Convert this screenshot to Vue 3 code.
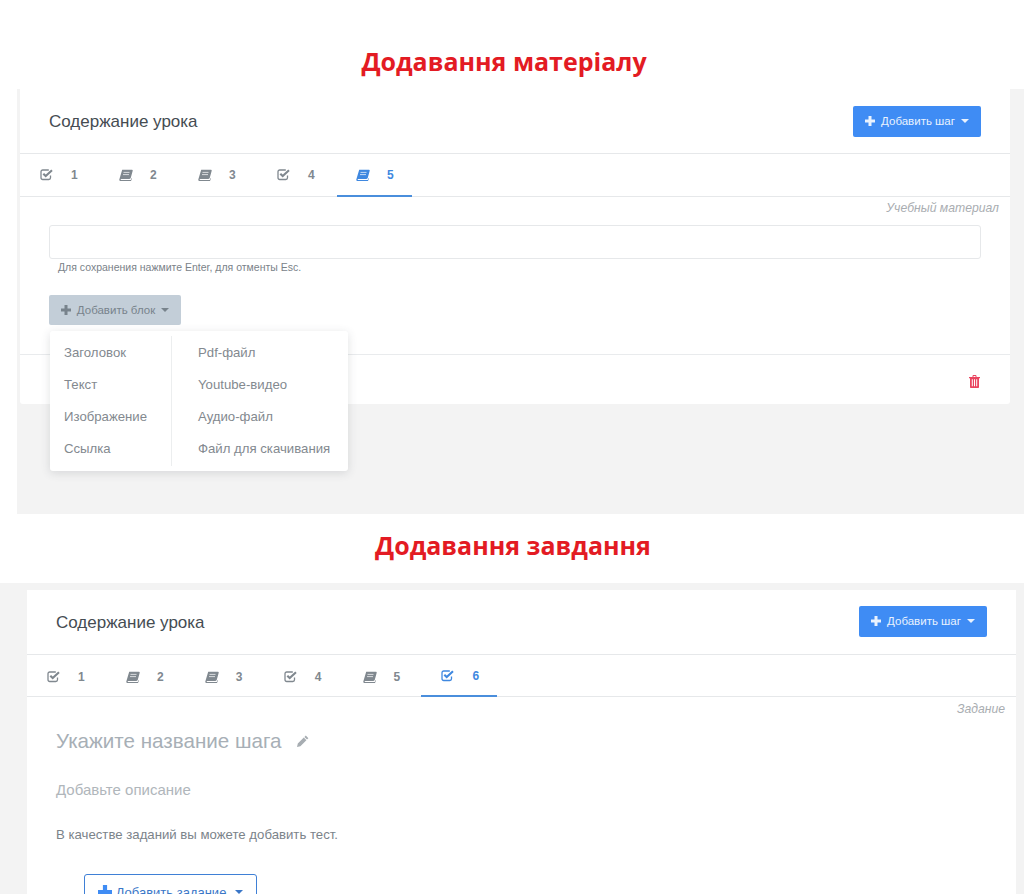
<script setup>
const tabs1 = [
  { n: 1, t: 'check' }, { n: 2, t: 'book' }, { n: 3, t: 'book' }, { n: 4, t: 'check' }, { n: 5, t: 'book', active: true }
]
const tabs2 = [
  { n: 1, t: 'check' }, { n: 2, t: 'book' }, { n: 3, t: 'book' }, { n: 4, t: 'check' }, { n: 5, t: 'book' }, { n: 6, t: 'check', active: true }
]
const menuLeft = ['Заголовок', 'Текст', 'Изображение', 'Ссылка']
const menuRight = ['Pdf-файл', 'Youtube-видео', 'Аудио-файл', 'Файл для скачивания']
</script>

<template>
  <div class="page">
    <h1 class="title first">Додавання матеріалу</h1>
    <section class="panel panel-one">
      <div class="card">
        <header class="head">
          <span class="head-title">Содержание урока</span>
          <button class="btn-primary">
            <svg class="plus" viewBox="0 0 10 10"><path d="M3.500 0h3v3.500H10v3H6.500V10h-3V6.500H0v-3h3.500z" /></svg>
            <span>Добавить шаг</span>
            <i class="caret"></i>
          </button>
        </header>
        <nav class="tabs">
          <div v-for="tab in tabs1" :key="tab.n" class="tab" :class="{ active: tab.active }">
            <svg v-if="tab.t === 'check'" class="ico" viewBox="0 0 14 12"><path d="M10.500 6.500v2.300c0 1-.7 1.700-1.700 1.700H2.700C1.700 10.500 1 9.800 1 8.800V2.700C1 1.700 1.700 1 2.700 1h6.100" fill="none" stroke="currentColor" stroke-width="1.300" /><path d="M3.300 4.700 5.700 7.100 12 1.300" fill="none" stroke="currentColor" stroke-width="2.100" /></svg>
            <svg v-else class="ico" viewBox="0 0 14 12"><path d="M3.200.8h9.800c.6 0 .8.400.7 1l-1.900 7c-.2.800-.7 1.100-1.400 1.100H2.200c-.6 0-.8.400-.7.700.1.300.4.400.8.400h8.800c.4 0 .8-.2.900-.6l.4-1.400.5.400-.8 2.300c-.1.400-.5.600-.9.600H2c-1 0-1.800-.8-1.700-1.800z" fill="currentColor" /><path d="M4.500 3.400h6M4 5.600h6" stroke="#fff" stroke-width=".7" /></svg>
            <span class="num">{{ tab.n }}</span>
          </div>
        </nav>
        <div class="kind">Учебный материал</div>
        <div class="body-one">
          <div class="field"></div>
          <p class="hint">Для сохранения нажмите Enter, для отменты Esc.</p>
          <div class="menu-wrap">
            <button class="btn-muted">
              <svg class="plus" viewBox="0 0 10 10"><path d="M3.500 0h3v3.500H10v3H6.500V10h-3V6.500H0v-3h3.500z" /></svg>
              <span>Добавить блок</span>
              <i class="caret"></i>
            </button>
            <div class="menu">
              <ul class="menu-col left">
                <li v-for="item in menuLeft" :key="item">{{ item }}</li>
              </ul>
              <ul class="menu-col right">
                <li v-for="item in menuRight" :key="item">{{ item }}</li>
              </ul>
            </div>
          </div>
        </div>
        <footer class="foot">
          <svg class="trash" viewBox="0 0 11 13"><path fill-rule="evenodd" d="M3.500 2V1.200C3.500.5 4 0 4.700 0h1.600c.7 0 1.200.5 1.200 1.200V2H11v1.300H10V12c0 .6-.4 1-1 1H2c-.6 0-1-.4-1-1V3.300H0V2zm1-.1h2V1h-2zM2.800 4.300v7h1v-7zm2.200 0v7h1v-7zm2.200 0v7h1v-7z" /></svg>
        </footer>
      </div>
    </section>

    <h1 class="title second">Додавання завдання</h1>
    <section class="panel panel-two">
      <div class="card card-two">
        <header class="head">
          <span class="head-title">Содержание урока</span>
          <button class="btn-primary">
            <svg class="plus" viewBox="0 0 10 10"><path d="M3.500 0h3v3.500H10v3H6.500V10h-3V6.500H0v-3h3.500z" /></svg>
            <span>Добавить шаг</span>
            <i class="caret"></i>
          </button>
        </header>
        <nav class="tabs">
          <div v-for="tab in tabs2" :key="tab.n" class="tab" :class="{ active: tab.active }">
            <svg v-if="tab.t === 'check'" class="ico" viewBox="0 0 14 12"><path d="M10.500 6.500v2.300c0 1-.7 1.700-1.700 1.700H2.700C1.700 10.500 1 9.800 1 8.800V2.700C1 1.700 1.700 1 2.700 1h6.100" fill="none" stroke="currentColor" stroke-width="1.300" /><path d="M3.300 4.700 5.700 7.100 12 1.300" fill="none" stroke="currentColor" stroke-width="2.100" /></svg>
            <svg v-else class="ico" viewBox="0 0 14 12"><path d="M3.200.8h9.800c.6 0 .8.400.7 1l-1.900 7c-.2.800-.7 1.100-1.400 1.100H2.200c-.6 0-.8.400-.7.700.1.300.4.400.8.400h8.800c.4 0 .8-.2.900-.6l.4-1.400.5.400-.8 2.300c-.1.400-.5.600-.9.600H2c-1 0-1.800-.8-1.700-1.800z" fill="currentColor" /><path d="M4.500 3.400h6M4 5.600h6" stroke="#fff" stroke-width=".7" /></svg>
            <span class="num">{{ tab.n }}</span>
          </div>
        </nav>
        <div class="kind">Задание</div>
        <div class="body-two">
          <div class="step-name">
            <span>Укажите название шага</span>
            <svg class="pencil" viewBox="0 0 12 12"><path d="M8.800.6 11.400 3.200 10 4.600 7.400 2zM6.800 2.600 9.400 5.200 3.400 11.200 0 12 .8 8.600z" /></svg>
          </div>
          <p class="descr">Добавьте описание</p>
          <p class="note">В качестве заданий вы можете добавить тест.</p>
          <button class="btn-outline">
            <svg class="plus big" viewBox="0 0 10 10"><path d="M3.500 0h3v3.500H10v3H6.500V10h-3V6.500H0v-3h3.500z" /></svg>
            <span>Добавить задание</span>
            <i class="caret"></i>
          </button>
        </div>
      </div>
    </section>
  </div>
</template>

<style>
html, body { margin: 0; background: #fff; }
</style>

<style scoped>
.page {
  width: 1024px;
  height: 894px;
  overflow: hidden;
  background: #fff;
  font-family: "Liberation Sans", Arial, sans-serif;
}
.title {
  margin: 0;
  text-align: center;
  font-family: "Open Sans", sans-serif;
  font-weight: 700;
  font-size: 25px;
  line-height: 34px;
  color: #e31b23;
}
.title.first { padding: 44px 16px 0 0; height: 45px; }
.title.second { padding: 14px 0 0 2px; height: 55px; }
.panel { background: #f3f3f3; }
.panel-one {
  margin-left: 17px;
  height: 425px;
  padding: 0 14px 0 3px;
  box-sizing: border-box;
}
.panel-two {
  height: 311px;
  padding: 7px 8px 0 27px;
  box-sizing: border-box;
}
.card { background: #fff; }
.panel-one .card { height: 315px; border-radius: 0 0 3px 3px; }
.card-two { height: 320px; }
.head {
  height: 65px;
  box-sizing: border-box;
  padding: 0 29px;
  display: flex;
  align-items: center;
  justify-content: space-between;
  border-bottom: 1px solid #e6e8ea;
}
.card-two .head { padding-bottom: 2px; }
.head-title { font-size: 17px; color: #454c52; padding-top: 2px; }
.card-two .head-title { padding-top: 4px; }
.btn-primary {
  width: 128px;
  height: 31px;
  border: 0;
  border-radius: 2px;
  background: #3f8cf4;
  color: #e9f2fe;
  font: 11.5px "Liberation Sans", Arial, sans-serif;
  display: flex;
  align-items: center;
  justify-content: center;
  padding: 0;
  gap: 6px;
}
.plus { width: 10px; height: 10px; fill: currentColor; flex: none; }
.caret {
  width: 0;
  height: 0;
  border-left: 4px solid transparent;
  border-right: 4px solid transparent;
  border-top: 4px solid currentColor;
}
.tabs {
  height: 43px;
  box-sizing: border-box;
  display: flex;
  gap: 4px;
  padding-left: 1px;
  border-bottom: 1px solid #e6e8ea;
}
.card-two .tabs { height: 42px; padding-left: 0; gap: 2.9px; }
.tab {
  width: 75px;
  height: 43px;
  box-sizing: border-box;
  padding: 0 0 1px 19px;
  display: flex;
  align-items: center;
  color: #80888f;
}
.card-two .tab { width: 76px; height: 42px; padding-left: 20px; padding-top: 1px; padding-bottom: 0; }
.card-two .num { margin-left: 17px; }
.tab.active { color: #3f88e0; border-bottom: 2px solid #4a8edc; padding-bottom: 0; padding-top: 1px; }
.ico { width: 14px; height: 12px; flex: none; }
.num { margin-left: 17px; font-size: 12px; font-weight: 700; }
.kind {
  height: 21px;
  line-height: 23px;
  text-align: right;
  padding-right: 11px;
  font-size: 12.2px;
  font-style: italic;
  color: #a9adb1;
}
.card-two .kind { height: 22px; line-height: 25px; }
.body-one { padding: 7px 29px 0; height: 137px; box-sizing: border-box; border-bottom: 1px solid #e9ebed; }
.field {
  height: 34px;
  box-sizing: border-box;
  border: 1px solid #e6e8ea;
  border-radius: 3px;
}
.hint {
  margin: 1px 0 0 9px;
  font-size: 10.5px;
  line-height: 14px;
  color: #7a8289;
}
.menu-wrap { position: relative; margin-top: 21px; width: 132px; }
.btn-muted {
  width: 132px;
  height: 30px;
  border: 0;
  border-radius: 2px;
  background: #c3ced8;
  color: #78838c;
  font: 11.5px "Liberation Sans", Arial, sans-serif;
  display: flex;
  align-items: center;
  justify-content: center;
  padding: 0;
  gap: 6px;
}
.menu {
  position: absolute;
  left: 1px;
  top: 36px;
  width: 298px;
  height: 140px;
  box-sizing: border-box;
  padding: 5px 0;
  display: flex;
  background: #fff;
  border-radius: 3px;
  box-shadow: 0 2px 10px rgba(60, 70, 80, .16);
}
.menu-col {
  list-style: none;
  margin: 0;
  padding: 1px 0 0;
  font-size: 13.2px;
  color: #83898f;
  box-sizing: border-box;
}
.menu-col li { height: 32px; line-height: 32px; }
.menu-col.left { width: 122px; padding-left: 14px; border-right: 1px solid #eceeef; }
.menu-col.right { padding-left: 26px; white-space: nowrap; }
.foot {
  height: 49px;
  box-sizing: border-box;
  padding: 3px 30px 0 0;
  display: flex;
  align-items: center;
  justify-content: flex-end;
}
.trash { width: 11px; height: 13px; fill: #ea4560; }
.body-two { padding: 0 29px; }
.step-name {
  display: flex;
  align-items: center;
  gap: 16px;
  margin-top: 9px;
  height: 26px;
  font-size: 20.6px;
  color: #a7afb6;
}
.pencil { width: 12px; height: 12px; fill: #a7adb2; }
.descr { margin: 26px 0 0; font-size: 15px; line-height: 20px; color: #b0b6bb; }
.note { margin: 26px 0 0; font-size: 13.2px; line-height: 18px; color: #7b838a; }
.btn-outline {
  margin: 30px 0 0 28px;
  width: 173px;
  height: 36px;
  box-sizing: border-box;
  border: 1px solid #3f80d6;
  border-radius: 3px;
  background: #fff;
  color: #3a77c8;
  font: 13px "Liberation Sans", Arial, sans-serif;
  display: flex;
  align-items: center;
  justify-content: center;
  gap: 4px;
  padding: 0;
}
.plus.big { width: 14px; height: 14px; color: #3f8cf4; }
.btn-outline .caret { margin-left: 5px; }
</style>
